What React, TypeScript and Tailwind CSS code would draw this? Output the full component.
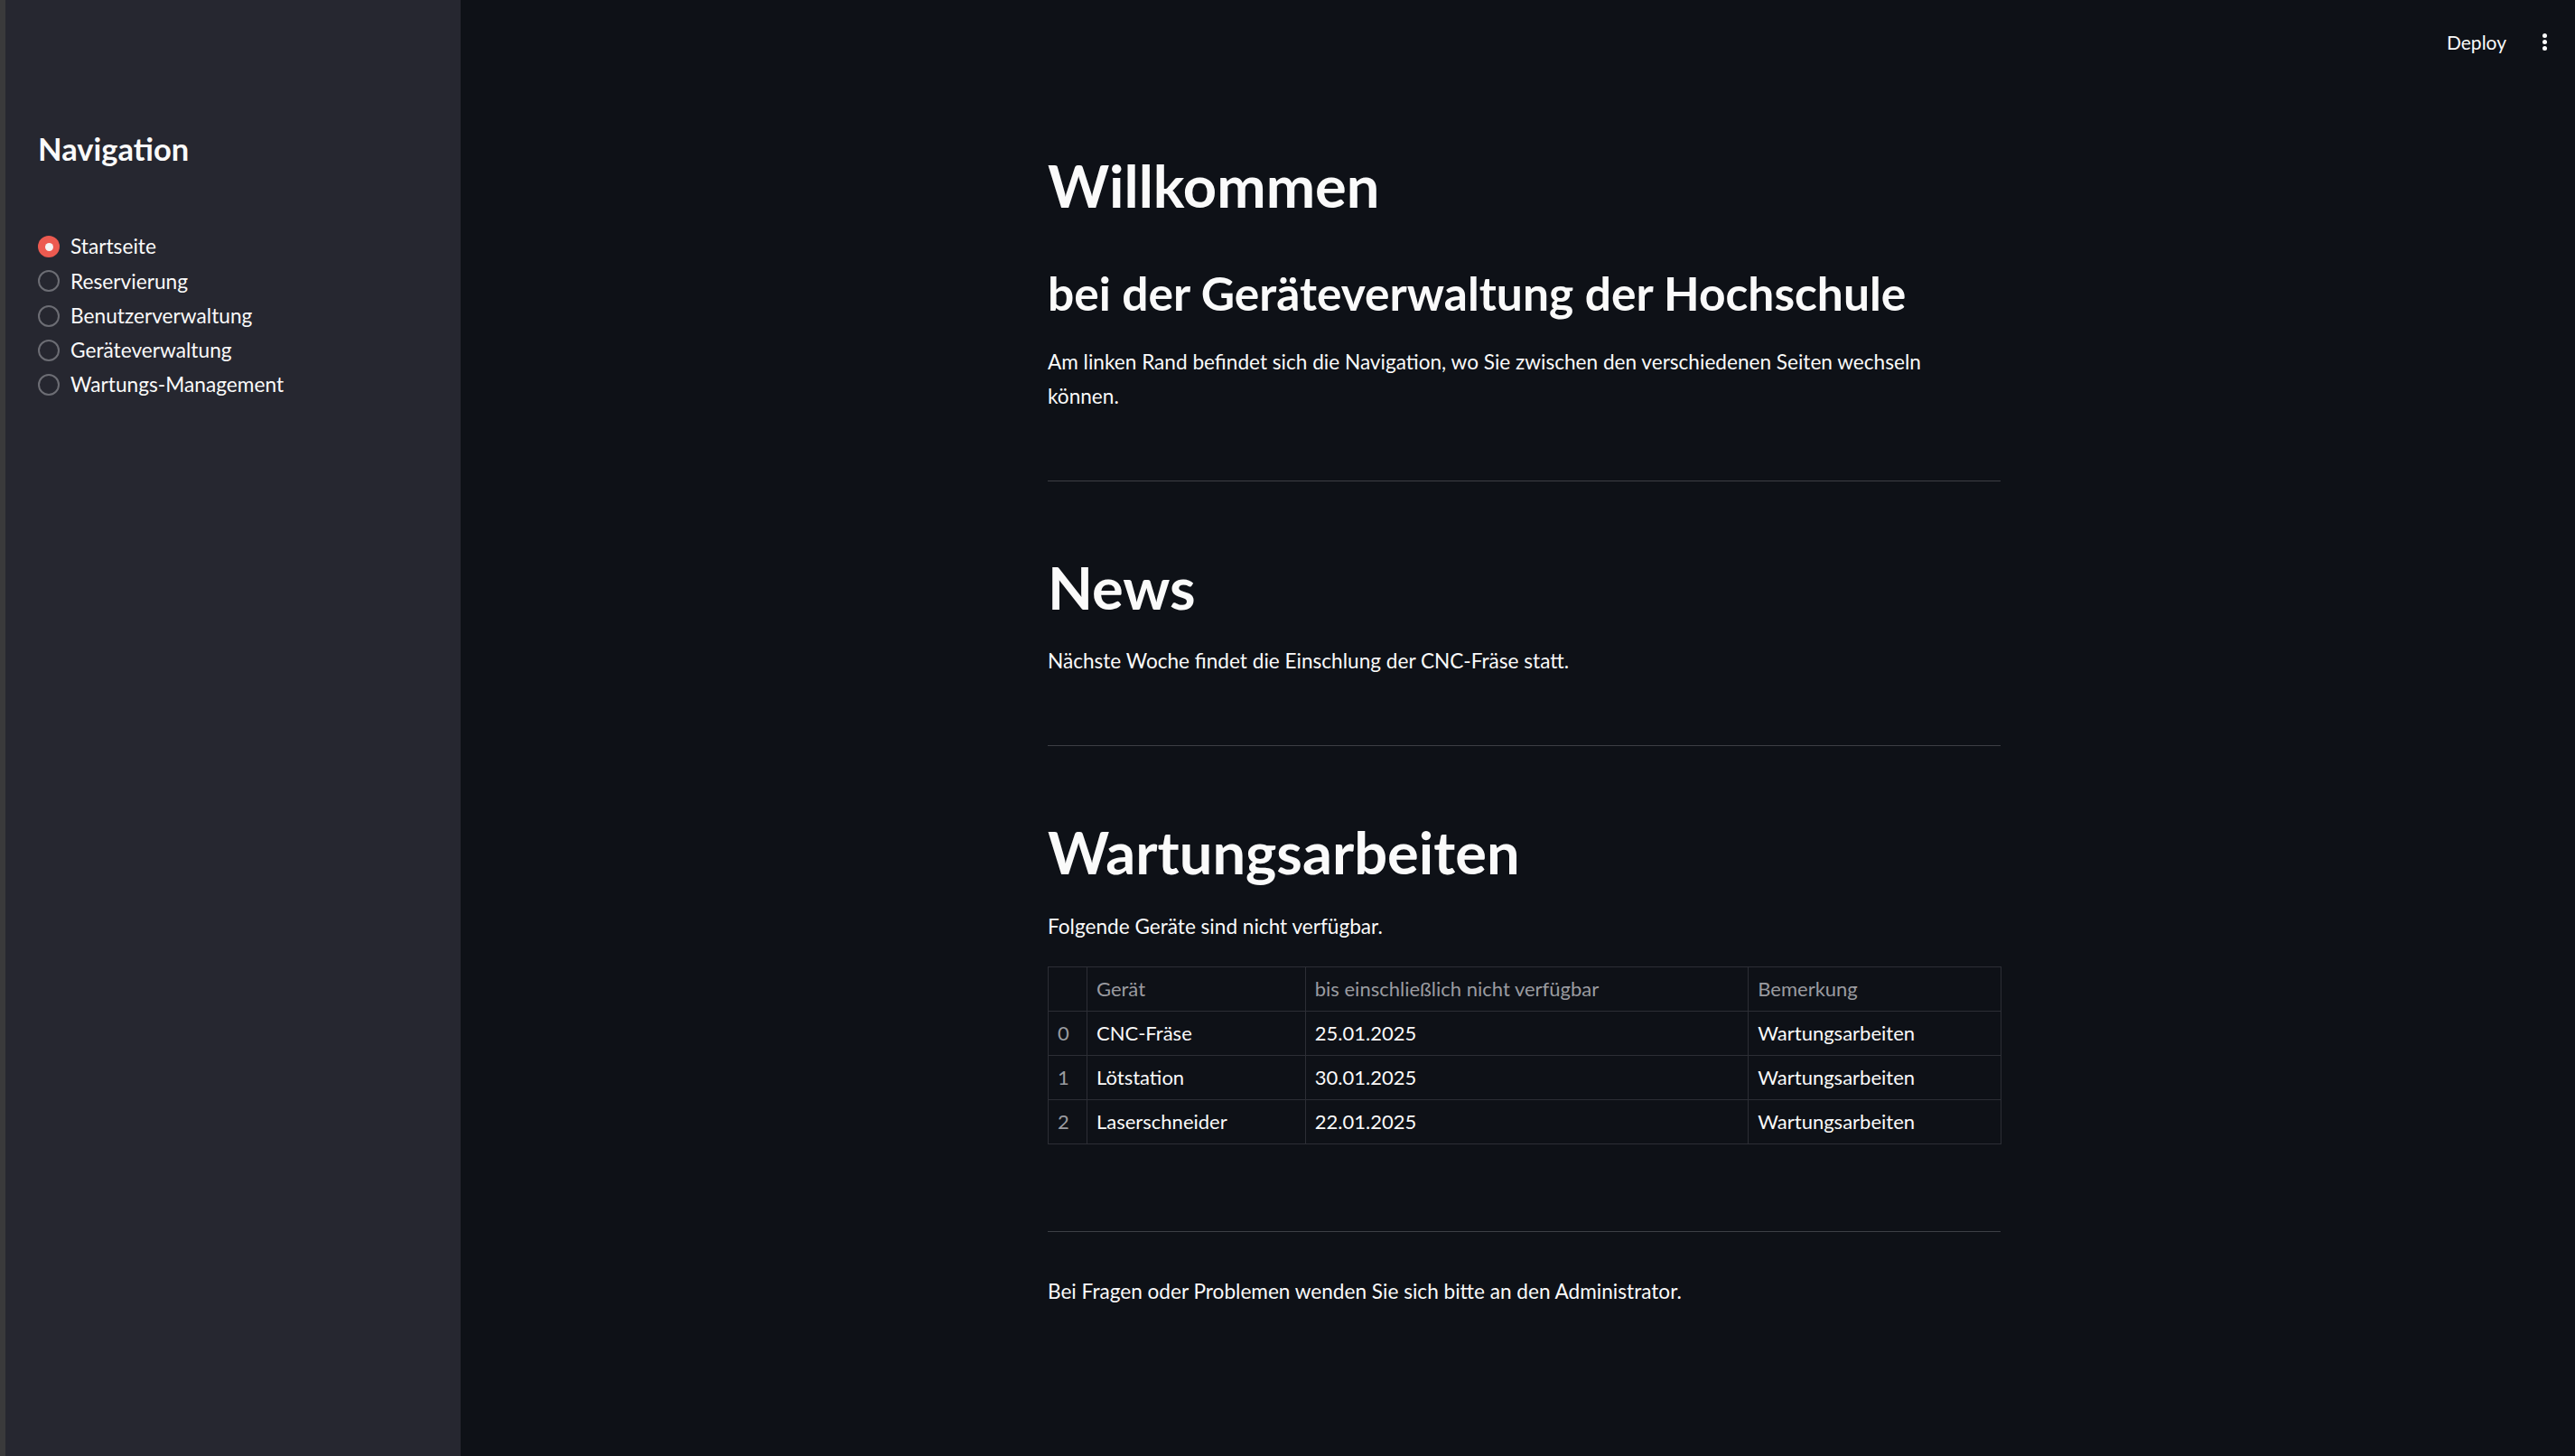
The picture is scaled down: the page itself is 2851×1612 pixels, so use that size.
import React from "react";

const navItems = [
  "Startseite",
  "Reservierung",
  "Benutzerverwaltung",
  "Geräteverwaltung",
  "Wartungs-Management",
];

const rows = [
  ["0", "CNC-Fräse", "25.01.2025", "Wartungsarbeiten"],
  ["1", "Lötstation", "30.01.2025", "Wartungsarbeiten"],
  ["2", "Laserschneider", "22.01.2025", "Wartungsarbeiten"],
];

function Cell({ children, head, idx, w }: { children?: React.ReactNode; head?: boolean; idx?: boolean; w: string }) {
  return (
    <div
      className={`${w} h-[48px] box-content flex items-center border-r border-b border-[#2c2e35] px-[10px] leading-[1.2] whitespace-nowrap ${
        head || idx ? "text-[#9a9ba0]" : "text-[#fafafa]"
      }`}
    >
      {children}
    </div>
  );
}

export default function App() {
  return (
    <div className="flex w-full h-[1612px] bg-[#0e1117] font-['Lato',sans-serif] text-[#fafafa] overflow-hidden">
      <div className="w-[6px] shrink-0 bg-[#3a3a3b]" />
      <aside className="w-[504px] shrink-0 bg-[#262730] pl-[36px] pt-[144px]">
        <h2 className="text-[34.5px] font-bold leading-[1.2]">Navigation</h2>
        <div className="mt-[68.5px] flex flex-col">
          {navItems.map((item, i) => (
            <div key={item} className="h-[38.25px] flex items-center gap-[12px]">
              {i === 0 ? (
                <div className="w-[24px] h-[24px] rounded-full bg-[#ec5a50] flex items-center justify-center">
                  <div className="w-[9px] h-[9px] rounded-full bg-[#f4f4f4]" />
                </div>
              ) : (
                <div className="w-[24px] h-[24px] rounded-full border-2 border-[#6c6d74] box-border" />
              )}
              <span className="text-[22.7px] leading-[1.2]">{item}</span>
            </div>
          ))}
        </div>
      </aside>
      <main className="flex-1 flex flex-col pl-[14px]">
        <header className="h-[93px] flex items-center justify-end pr-[31px]">
          <span className="text-[21px] leading-[1.2] mr-[40px]">Deploy</span>
          <div className="flex flex-col gap-[2px]">
            <div className="w-[5px] h-[5px] rounded-full bg-[#fafafa]" />
            <div className="w-[5px] h-[5px] rounded-full bg-[#fafafa]" />
            <div className="w-[5px] h-[5px] rounded-full bg-[#fafafa]" />
          </div>
        </header>
        <div className="mx-auto w-[1055px] flex flex-col">
          <h1 className="mt-[72.8px] text-[65px] font-bold leading-[1.2]">Willkommen</h1>
          <h2 className="mt-[50.4px] text-[51.5px] font-bold leading-[1.2]">bei der Geräteverwaltung der Hochschule</h2>
          <p className="mt-[26.05px] text-[22.6px] leading-[38.4px]">
            Am linken Rand befindet sich die Navigation, wo Sie zwischen den verschiedenen Seiten wechseln
            <br />
            können.
          </p>
          <hr className="mt-[73.15px] border-0 h-px bg-[#3d3f45]" />
          <h1 className="mt-[77.8px] text-[65px] font-bold leading-[1.2]">News</h1>
          <p className="mt-[24.25px] text-[22.6px] leading-[38.4px]">
            Nächste Woche findet die Einschlung der CNC-Fräse statt.
          </p>
          <hr className="mt-[73.55px] border-0 h-px bg-[#3d3f45]" />
          <h1 className="mt-[77.8px] text-[65px] font-bold leading-[1.2]">Wartungsarbeiten</h1>
          <p className="mt-[25.25px] text-[22.6px] leading-[38.4px]">Folgende Geräte sind nicht verfügbar.</p>
          <div className="mt-[24.85px] border-t border-l border-[#2c2e35] text-[22px] flex flex-col w-[1056px]">
            <div className="flex">
              <Cell w="w-[22px]" idx> </Cell>
              <Cell w="w-[221px]" head>Gerät</Cell>
              <Cell w="w-[470px]" head>bis einschließlich nicht verfügbar</Cell>
              <Cell w="w-[259px]" head>Bemerkung</Cell>
            </div>
            {rows.map((r) => (
              <div key={r[0]} className="flex">
                <Cell w="w-[22px]" idx>{r[0]}</Cell>
                <Cell w="w-[221px]">{r[1]}</Cell>
                <Cell w="w-[470px]">{r[2]}</Cell>
                <Cell w="w-[259px]">{r[3]}</Cell>
              </div>
            ))}
          </div>
          <hr className="mt-[95.7px] border-0 h-px bg-[#3d3f45]" />
          <p className="mt-[47.3px] text-[22.6px] leading-[38.4px]">
            Bei Fragen oder Problemen wenden Sie sich bitte an den Administrator.
          </p>
        </div>
      </main>
    </div>
  );
}
